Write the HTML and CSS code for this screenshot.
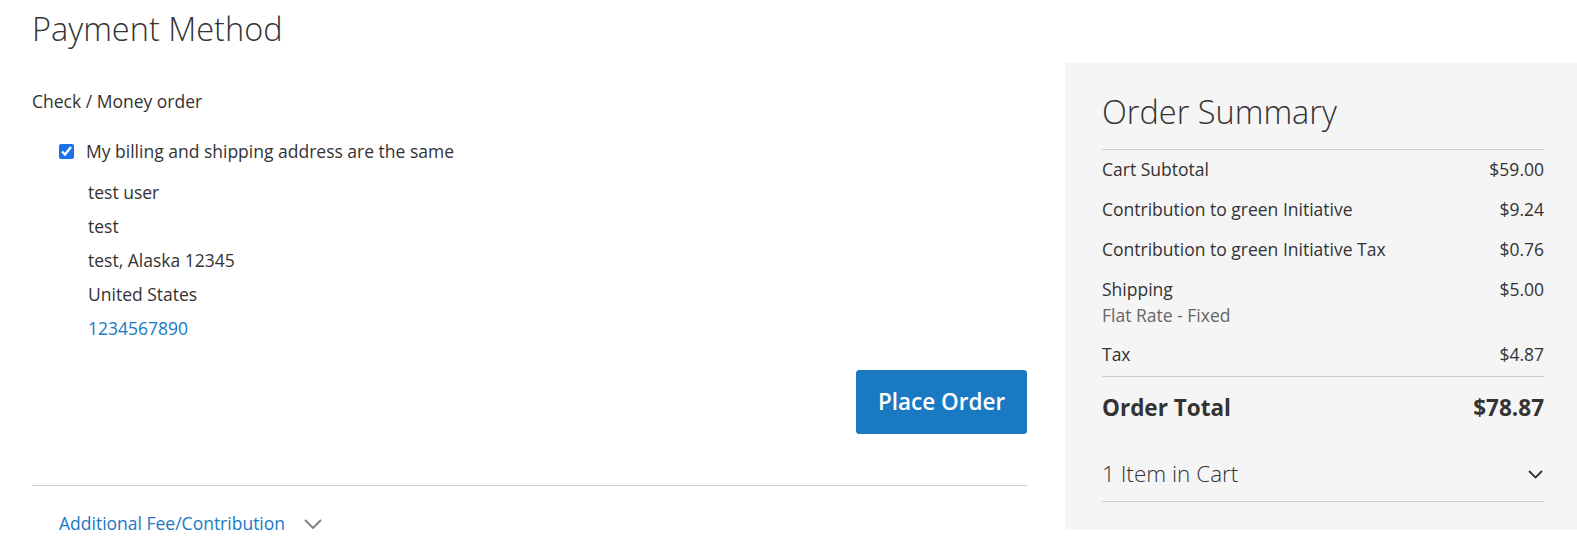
FILE: index.html
```html
<!DOCTYPE html>
<html lang="en">
<head>
<meta charset="utf-8">
<title>Checkout - Payment</title>
<link rel="stylesheet" href="styles.css">
</head>
<body>
<div class="checkout">
  <main class="payment">
    <h1 class="step-title">Payment Method</h1>
    <div class="method-title">Check / Money order</div>
    <label class="same-address">
      <input type="checkbox" class="check" checked>
      <span>My billing and shipping address are the same</span>
    </label>
    <div class="address">
      <div class="addr-line">test user</div>
      <div class="addr-line">test</div>
      <div class="addr-line">test, Alaska 12345</div>
      <div class="addr-line">United States</div>
      <div class="addr-line"><a class="phone" href="#">1234567890</a></div>
    </div>
    <div class="actions">
      <button class="btn-primary" type="button">Place Order</button>
    </div>
    <div class="fee">
      <a class="fee-toggle" href="#">Additional Fee/Contribution</a>
      <svg class="fee-chevron" width="18" height="10" viewBox="0 0 18 10"><path d="M1 1 L9 9 L17 1" fill="none" stroke="#7d7d7d" stroke-width="1.8"/></svg>
    </div>
  </main>
  <aside class="summary">
    <h2 class="summary-title">Order Summary</h2>
    <div class="totals">
      <div class="row"><span>Cart Subtotal</span><span>$59.00</span></div>
      <div class="row"><span>Contribution to green Initiative</span><span>$9.24</span></div>
      <div class="row"><span>Contribution to green Initiative Tax</span><span>$0.76</span></div>
      <div class="row shipping">
        <div class="ship-label"><span>Shipping</span><span class="ship-method">Flat Rate - Fixed</span></div>
        <span>$5.00</span>
      </div>
      <div class="row tax"><span>Tax</span><span>$4.87</span></div>
      <div class="row grand"><span>Order Total</span><span>$78.87</span></div>
    </div>
    <div class="items">
      <span>1 Item in Cart</span>
      <svg class="items-chevron" width="15" height="9" viewBox="0 0 15 9"><path d="M1 1 L7.5 7.5 L14 1" fill="none" stroke="#333" stroke-width="1.8"/></svg>
    </div>
  </aside>
</div>
</body>
</html>
```
FILE: styles.css
```css
* { box-sizing: border-box; }
html, body { margin: 0; padding: 0; background: #fff; }
body {
  font-family: "Open Sans", "Liberation Sans", sans-serif;
  font-size: 17.5px;
  line-height: 28px;
  color: #333;
}
.checkout {
  display: flex;
  gap: 38px;
  padding-left: 32px;
  align-items: flex-start;
}
.payment {
  width: 995px;
  flex: none;
}
.step-title {
  margin: 0;
  padding-top: 8px;
  font-size: 32.5px;
  line-height: 42px;
  font-weight: 300;
}
.method-title {
  margin-top: 37px;
}
.same-address {
  display: flex;
  align-items: center;
  gap: 12px;
  margin-top: 22px;
  padding-left: 27px;
}
.check {
  margin: 0;
  width: 15px;
  height: 15px;
  accent-color: #1a73e8;
}
.address {
  margin-top: 10px;
  padding-left: 56px;
}
.addr-line { line-height: 34px; }
.phone { color: #1979c3; text-decoration: none; }
.actions {
  display: flex;
  justify-content: flex-end;
  margin-top: 25px;
}
.btn-primary {
  font-family: inherit;
  background: #1979c3;
  border: 1px solid #1979c3;
  color: #fff;
  font-size: 22.5px;
  font-weight: 600;
  line-height: 32px;
  height: 64px;
  width: 171px;
  padding: 0;
  border-radius: 3px;
}
.fee {
  margin-top: 51px;
  border-top: 1px solid #ccc;
  padding: 23px 0 0 27px;
  display: flex;
  align-items: center;
  gap: 19px;
}
.fee-toggle { color: #1979c3; text-decoration: none; }
.fee-chevron { margin-top: 2px; }

.summary {
  flex: 1;
  margin-top: 63px;
  background: #f5f5f5;
  padding: 30px 33px 28px 37px;
}
.summary-title {
  margin: 0;
  font-size: 32.5px;
  line-height: 38px;
  font-weight: 300;
  padding-bottom: 18px;
  border-bottom: 1px solid #ccc;
}
.row {
  display: flex;
  justify-content: space-between;
  align-items: flex-start;
  padding: 5px 0 7px;
}
.ship-label { display: flex; flex-direction: column; }
.ship-method {
  font-size: 17.5px;
  line-height: 24px;
  color: #666;
}
.row.tax {
  padding: 6px 0 8px;
  border-bottom: 1px solid #ccc;
}
.row.grand {
  padding: 15px 0 0;
  font-size: 22.5px;
  line-height: 32px;
  font-weight: 700;
}
.items {
  display: flex;
  justify-content: space-between;
  align-items: center;
  margin-top: 34px;
  padding-bottom: 11px;
  border-bottom: 1px solid #ccc;
  font-size: 22.5px;
  line-height: 32px;
  font-weight: 300;
}
.items-chevron { margin-right: 1px; }
```
